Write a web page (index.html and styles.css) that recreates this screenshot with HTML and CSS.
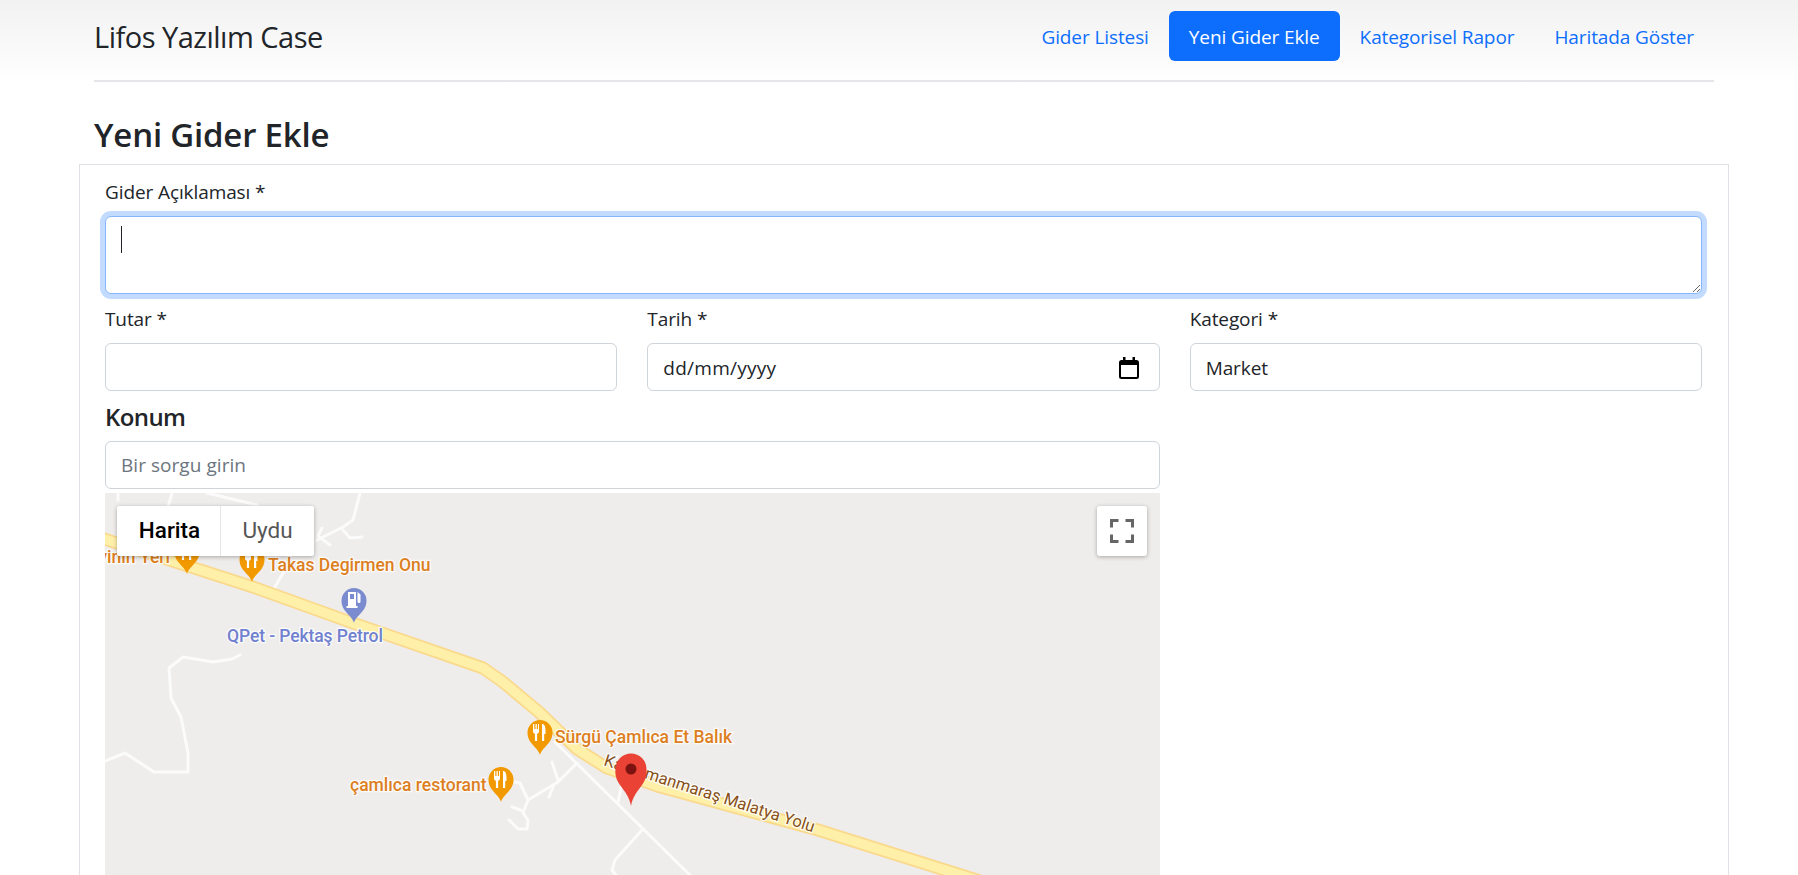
FILE: index.html
```html
<!DOCTYPE html>
<html lang="tr">
<head>
<meta charset="utf-8">
<title>Lifos Yazılım Case</title>
<link rel="stylesheet" href="styles.css">
</head>
<body>
<div class="band">
  <header class="header">
    <a class="brand" href="#">Lifos Yazılım Case</a>
    <nav class="nav">
      <a class="nav-link" href="#">Gider Listesi</a>
      <a class="nav-link active" href="#">Yeni Gider Ekle</a>
      <a class="nav-link" href="#">Kategorisel Rapor</a>
      <a class="nav-link" href="#">Haritada Göster</a>
    </nav>
  </header>
</div>
<h1 class="page-title">Yeni Gider Ekle</h1>
<main class="card">
  <div class="group">
    <label class="label">Gider Açıklaması *</label>
    <div class="area-wrap">
      <textarea class="control area"></textarea>
      <span class="caret"></span>
    </div>
  </div>
  <div class="row">
    <div class="group">
      <label class="label">Tutar *</label>
      <input class="control" type="text">
    </div>
    <div class="group">
      <label class="label">Tarih *</label>
      <div class="control date">
        <span class="date-text">dd/mm/yyyy</span>
        <svg class="cal" width="20" height="22" viewBox="0 0 20 22"><path d="M4 0h2.500v3h7V0H16v3h1.500A2.500 2.500 0 0 1 20 5.500v14a2.500 2.500 0 0 1-2.500 2.500h-15A2.500 2.500 0 0 1 0 19.500v-14A2.500 2.500 0 0 1 2.500 3H4zM2 8v11.500c0 .3.200.5.500.5h15c.3 0 .5-.2.500-.5V8z" fill="#000"/></svg>
      </div>
    </div>
    <div class="group">
      <label class="label">Kategori *</label>
      <input class="control" type="text" value="Market">
    </div>
  </div>
  <section class="location">
    <h4 class="location-title">Konum</h4>
    <input class="control search" type="text" placeholder="Bir sorgu girin">
    <div class="map">
      <svg class="map-canvas" width="1055" height="625" viewBox="105 493 1055 625">
        <defs>
          <g id="pin-food">
            <path d="M0 0C-2-8-12.500-11-12.500-22.500a12.500 12.500 0 1 1 25 0C12.500-11 2-8 0 0z" fill="#f29900"/>
            <path d="M-7-31h1.300v5h1.200v-5h1.300v5h1.200v-5H-1v7.500c0 1.300-.9 2-1.900 2.300V-14h-2.200v-7.200C-6.100-21.500-7-22.200-7-23.500zM2-31c2.500 0 3.500 2.500 3.500 6.500v3.500H4.200v7H2z" fill="#fff"/>
          </g>
        </defs>
        <rect x="105" y="493" width="1055" height="625" fill="#eeedeb"/>
        <g class="minor-road">
          <path d="M240 655 232 659 213 662 183 657 169 668 171 698 181 717 188 753 188 772 154 772 125 753 105 761"/>
          <path d="M577 763 558 782 528 800 523 813 528 820 527 829 518 829 509 820"/>
          <path d="M512 807 523 811M552 762 558 780M553 787 549 797M515 782 520 783 528 800"/>
          <path d="M555 742 700 885M642 830 615 860 612 870 618 878M618 802 622 783"/>
          <path d="M360 493 353 520 343 527 317 540M343 530 350 538 362 537M322 528 318 536 330 545"/>
          <path d="M273 590 285 570M172 493 168 507M118 494 118 500M207 493 257 505"/>
        </g>
        <path class="road-edge" d="M95 536 253 587 353 623 483 668 503 682 540 713 577 749 607 768 657 786 818 830 980 881"/>
        <path class="road-fill" d="M95 536 253 587 353 623 483 668 503 682 540 713 577 749 607 768 657 786 818 830 980 881"/>
        <path id="road-label" d="M603 765 812 832" fill="none"/>
        <text class="road-text"><textPath href="#road-label">Kahramanmaraş Malatya Yolu</textPath></text>
        <use href="#pin-food" x="187" y="574"/>
        <use href="#pin-food" x="252" y="582"/>
        <use href="#pin-food" x="540" y="755"/>
        <use href="#pin-food" x="501" y="802"/>
        <g transform="translate(354 623)">
          <path d="M0 0C-2-8-12.500-11-12.500-22.500a12.500 12.500 0 1 1 25 0C12.500-11 2-8 0 0z" fill="#7b8bd0"/>
          <path d="M-6-31h8v14h1.500v2h-11v-2H-6zM-4-29v5h4v-5zM3.500-31l3 2.500v7a1.500 1.500 0 0 1-3 0z" fill="#fff"/>
        </g>
        <text class="poi poi-food" x="170" y="563" text-anchor="end">Şirvinin Yeri</text>
        <text class="poi poi-food" x="268" y="571">Takas Degirmen Onu</text>
        <text class="poi poi-gas" x="227" y="642">QPet - Pektaş Petrol</text>
        <text class="poi poi-food" x="555" y="743">Sürgü Çamlıca Et Balık</text>
        <text class="poi poi-food" x="350" y="791">çamlıca restorant</text>
        <g transform="translate(631 806)">
          <path d="M0 0C-1.500-9-6-14-11-21-17-29-15.500-36.700-15.500-37a15.500 15.500 0 1 1 31 0c0 .3 1.500 8-4.500 16C6-14 1.500-9 0 0z" fill="#ea4335"/>
          <circle cx="0" cy="-37" r="5.500" fill="#7c1310"/>
        </g>
      </svg>
      <div class="map-type">
        <button class="map-btn on" type="button">Harita</button>
        <button class="map-btn" type="button">Uydu</button>
      </div>
      <button class="fullscreen" type="button" aria-label="Tam ekran">
        <svg width="24" height="24" viewBox="0 0 24 24"><path d="M1.500 8.500v-7h7M15.500 1.500h7v7M22.500 15.500v7h-7M8.500 22.500h-7v-7" fill="none" stroke="#666" stroke-width="3"/></svg>
      </button>
    </div>
  </section>
</main>
</body>
</html>
```
FILE: styles.css
```css
* { box-sizing: border-box; }
html, body { height: 100%; margin: 0; overflow: hidden; background: #fff; }
body { font-family: "Open Sans", "Noto Sans", sans-serif; font-size: 19px; letter-spacing: -0.1px; color: #212529; }

.band { height: 85px; padding: 11px 84px 0 94px; background: linear-gradient(#f2f2f2, #fff); }
.header { display: flex; justify-content: space-between; height: 71px; border-bottom: 2px solid #e4e6e9; }
.brand { font-size: 29px; letter-spacing: -0.5px; line-height: 52px; color: #212529; text-decoration: none; }
.nav { display: flex; height: 50px; }
.nav-link { padding: 0 20px; line-height: 52px; color: #0d6efd; text-decoration: none; border-radius: 6px; }
.nav-link.active { background: #0d6efd; color: #fff; }

.page-title { margin: 0; padding: 0 0 0 94px; height: 79px; line-height: 100px; font-size: 33px; font-weight: 600; letter-spacing: -0.2px; }

.card { margin: 0 69px 0 79px; padding: 12px 26px 0 25px; border: 1px solid #dee2e6; }
.group { margin-bottom: 10px; }
.label { display: block; height: 30px; margin-bottom: 9px; line-height: 30px; }
.row { display: grid; grid-template-columns: repeat(3, 1fr); column-gap: 30px; }

.control { display: block; width: 100%; height: 48px; padding: 0 16px 0 15px; border: 1px solid #ced4da; border-radius: 6px; background: #fff; font: inherit; letter-spacing: inherit; color: #212529; outline: none; }
.control::placeholder { color: #6c757d; opacity: 1; }
.row .control { padding-top: 1px; }
.search { letter-spacing: 0.05px; }

.area-wrap { position: relative; }
.area { height: 78px; border-color: #86b7fe; box-shadow: 0 0 0 5px #c2dbfe; resize: vertical; }
.caret { position: absolute; left: 16px; top: 10px; width: 1px; height: 27px; background: #212529; }

.date { display: flex; align-items: center; justify-content: space-between; }
.date-text { letter-spacing: 0.25px; }
.cal { margin-right: 4px; }

.location { width: 1055px; }
.location-title { margin: 0 0 10px; height: 30px; line-height: 32px; font-size: 24px; font-weight: 600; letter-spacing: -0.6px; }

.map { position: relative; height: 625px; margin-top: 4px; overflow: hidden; background: #eeedeb; font-family: Roboto, sans-serif; letter-spacing: 0; }
.map-canvas { display: block; }
.minor-road path { fill: none; stroke: #fbfbfb; stroke-width: 3; stroke-linejoin: round; stroke-linecap: round; }
.road-edge { fill: none; stroke: #fad98c; stroke-width: 13; stroke-linejoin: round; }
.road-fill { fill: none; stroke: #feefa9; stroke-width: 9.500; stroke-linejoin: round; }
.poi { font-family: Roboto, sans-serif; font-size: 17.500px; font-weight: 500; paint-order: stroke; stroke: rgba(255, 255, 255, .8); stroke-width: 2.500px; }
.poi-food { fill: #dd7f1f; }
.poi-gas { fill: #7081cf; letter-spacing: -0.1px; }
.road-text { font-family: Roboto, sans-serif; font-size: 16.500px; fill: #86501a; paint-order: stroke; stroke: rgba(255, 255, 255, .85); stroke-width: 2.500px; }

.map-type { position: absolute; left: 12px; top: 13px; display: flex; height: 50px; border-radius: 3px; overflow: hidden; background: #fff; box-shadow: 0 1px 4px rgba(0, 0, 0, .3); }
.map-btn { width: 93px; height: 50px; padding: 0 0 2px; border: 0; background: #fff; font-family: Roboto, sans-serif; font-size: 22.500px; color: #565656; }
.map-btn.on { width: 104px; padding-left: 2px; border-right: 1px solid #e6e6e6; font-weight: 500; color: #000; }
.fullscreen { position: absolute; right: 13px; top: 13px; display: flex; align-items: center; justify-content: center; width: 50px; height: 50px; padding: 0; border: 0; border-radius: 3px; background: #fff; box-shadow: 0 1px 4px rgba(0, 0, 0, .3); }
```
